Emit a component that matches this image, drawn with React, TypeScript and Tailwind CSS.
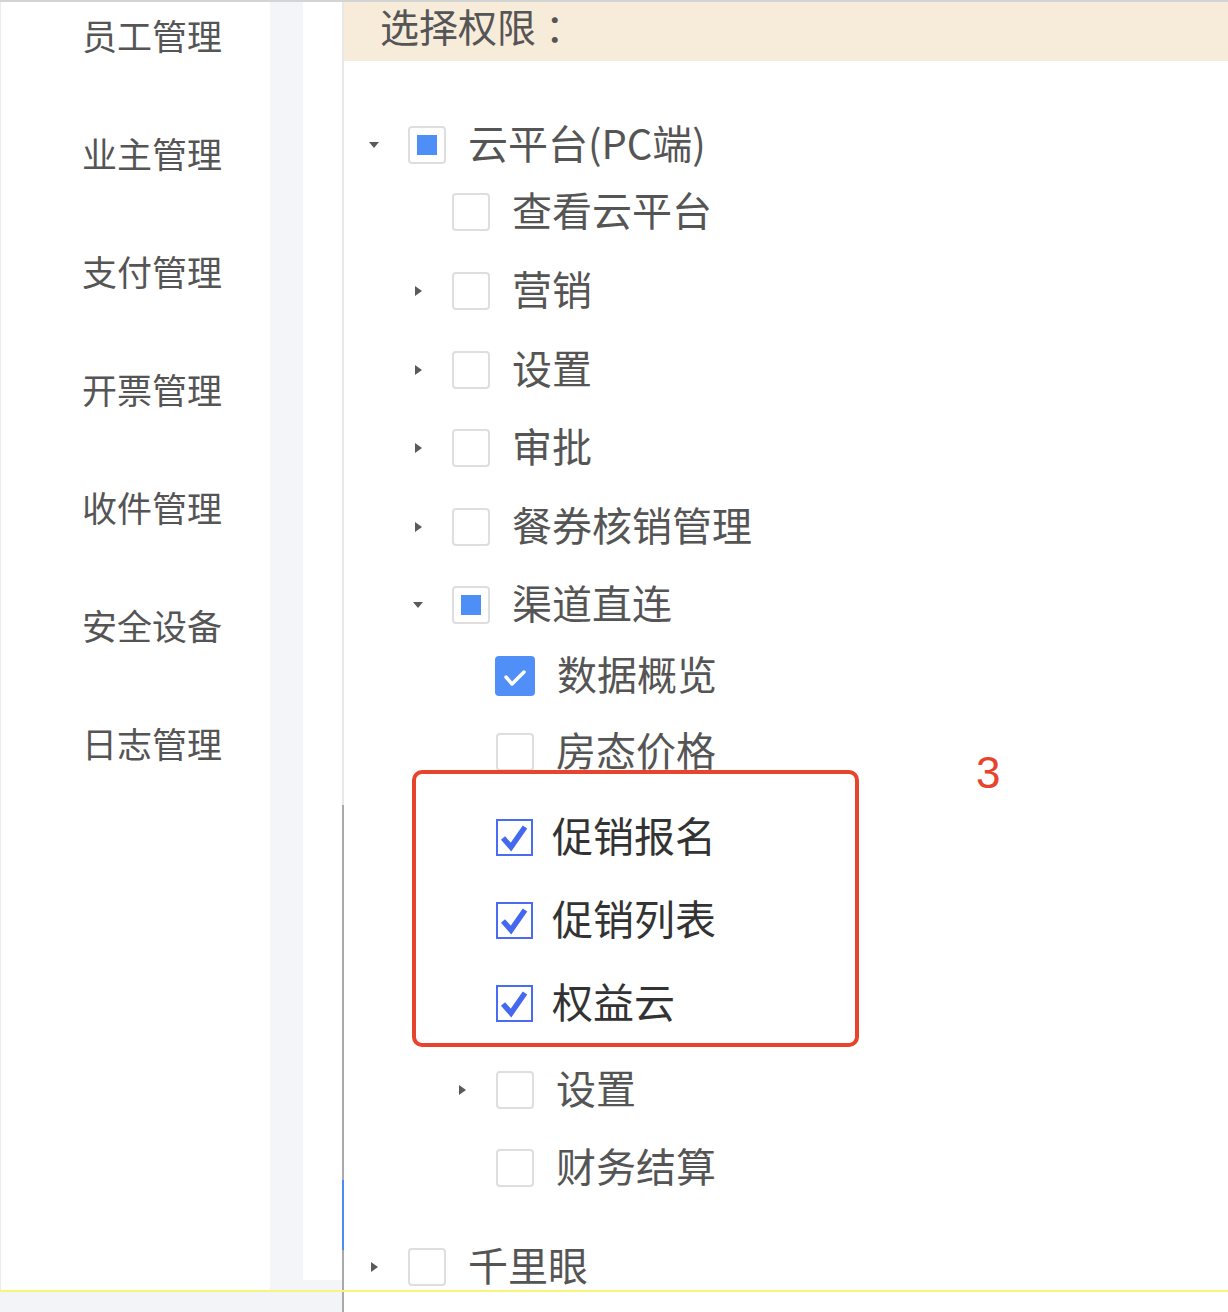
import React from "react";

type State = "off" | "ind" | "on";
type Row = {
  level: 0 | 1 | 2;
  caret: "down" | "right" | null;
  state: State;
  label: string;
  mt: string;
};

const levelPad: Record<number, string> = {
  0: "pl-[20px]",
  1: "pl-[64px]",
  2: "pl-[108px]",
};

const topRows: Row[] = [
  { level: 0, caret: "down", state: "ind", label: "云平台(PC端)", mt: "mt-[64px]" },
  { level: 1, caret: null, state: "off", label: "查看云平台", mt: "mt-[27px]" },
  { level: 1, caret: "right", state: "off", label: "营销", mt: "mt-[39px]" },
  { level: 1, caret: "right", state: "off", label: "设置", mt: "mt-[39px]" },
  { level: 1, caret: "right", state: "off", label: "审批", mt: "mt-[38px]" },
  { level: 1, caret: "right", state: "off", label: "餐券核销管理", mt: "mt-[39px]" },
  { level: 1, caret: "down", state: "ind", label: "渠道直连", mt: "mt-[38px]" },
  { level: 2, caret: null, state: "on", label: "数据概览", mt: "mt-[31px]" },
  { level: 2, caret: null, state: "off", label: "房态价格", mt: "mt-[36px]" },
];

const bottomRows: Row[] = [
  { level: 2, caret: "right", state: "off", label: "设置", mt: "mt-[23px]" },
  { level: 2, caret: null, state: "off", label: "财务结算", mt: "mt-[38px]" },
  { level: 0, caret: "right", state: "off", label: "千里眼", mt: "mt-[59px]" },
];

const boxed = [
  { label: "促销报名", mt: "" },
  { label: "促销列表", mt: "mt-[43px]" },
  { label: "权益云", mt: "mt-[43px]" },
];

const sideItems = ["员工管理", "业主管理", "支付管理", "开票管理", "收件管理", "安全设备", "日志管理"];

function Caret({ dir }: { dir: "down" | "right" | null }) {
  return (
    <div className="w-[20px] h-[20px] flex items-center justify-center shrink-0">
      {dir === "down" && (
        <svg width="10" height="6" viewBox="0 0 10 6">
          <polygon points="0,0 10,0 5,6" fill="#5a5a5a" />
        </svg>
      )}
      {dir === "right" && (
        <svg width="7" height="10" viewBox="0 0 7 10">
          <polygon points="0,0 7,5 0,10" fill="#5a5a5a" />
        </svg>
      )}
    </div>
  );
}

function Check({ state }: { state: State }) {
  if (state === "on") {
    return (
      <div className="w-[40px] h-[40px] rounded-[4px] bg-[#4f8ff7] flex items-center justify-center shrink-0 -ml-[1px]">
        <svg width="40" height="40" viewBox="0 0 40 40">
          <polyline points="11,21 17,28 29,16" fill="none" stroke="#ffffff" strokeWidth="3.5" strokeLinecap="round" strokeLinejoin="round" />
        </svg>
      </div>
    );
  }
  return (
    <div className="w-[38px] h-[38px] rounded-[4px] border-2 border-[#dedede] bg-white flex items-center justify-center shrink-0">
      {state === "ind" && <div className="w-[20px] h-[20px] bg-[#4e8ef7]" />}
    </div>
  );
}

function TreeRow({ row }: { row: Row }) {
  return (
    <div className={`flex items-center h-[40px] ${row.mt} ${levelPad[row.level]}`}>
      <Caret dir={row.caret} />
      <div className="ml-[24px]">
        <Check state={row.state} />
      </div>
      <span className="ml-[22px] pb-[6px] text-[40px] leading-[40px] text-[#555555] whitespace-nowrap">{row.label}</span>
    </div>
  );
}

function BlueCheck() {
  return (
    <div className="w-[37px] h-[37px] border-2 border-[#4a6cf5] bg-white shrink-0 flex items-center justify-center">
      <svg width="33" height="33" viewBox="0 0 33 33">
        <polyline points="5,17 13,26 27,6" fill="none" stroke="#4468f0" strokeWidth="5.5" strokeLinejoin="miter" />
      </svg>
    </div>
  );
}

export default function App() {
  return (
    <div className="w-[1228px] h-[1312px] relative overflow-hidden bg-white flex flex-col font-[family-name:'Noto_Sans_CJK_SC','Noto_Sans',sans-serif]">
      <div className="h-[2px] bg-[#d4d4d4] shrink-0" />
      <div className="flex h-[1288px] shrink-0">
        {/* sidebar */}
        <div className="w-[270px] bg-white border-l border-[#ececec] flex flex-col gap-[48px] pl-[81px]">
          {sideItems.map((s) => (
            <div key={s} className="h-[70px] pb-[6px] flex items-center text-[35px] leading-none text-[#555555] whitespace-nowrap">
              {s}
            </div>
          ))}
        </div>
        <div className="w-[33px] bg-[#f3f5f8]" />
        <div className="w-[39px] flex flex-col">
          <div className="h-[1278px] bg-white" />
          <div className="flex-1 bg-[#f3f5f8]" />
        </div>
        {/* divider */}
        <div className="w-[2px] flex flex-col">
          <div className="h-[803px] bg-[#e8e8e8]" />
          <div className="h-[375px] bg-[#a9a9a9]" />
          <div className="h-[70px] bg-[#4a8cf6]" />
          <div className="flex-1 bg-[#a9a9a9]" />
        </div>
        {/* panel */}
        <div className="flex-1 flex flex-col">
          <div className="h-[59px] bg-[#f7ebda] pl-[36px] flex items-start shrink-0">
            <span className="mt-[1px] text-[39px] leading-[44px] text-[#555555] whitespace-nowrap">
              选择权限<span className="ml-[9px]">：</span>
            </span>
          </div>
          <div className="flex flex-col">
            {topRows.map((r, i) => (
              <TreeRow key={"t" + i} row={r} />
            ))}
            <div className="relative -mt-[2px] ml-[68px] w-[447px] border-[4px] border-[#e8432c] rounded-[10px] bg-white pt-[43px] pb-[20px] pl-[80px]">
              {boxed.map((b) => (
                <div key={b.label} className={`flex items-center h-[40px] ${b.mt}`}>
                  <BlueCheck />
                  <span className="ml-[19px] pb-[6px] text-[41px] leading-[40px] text-[#333333] whitespace-nowrap">{b.label}</span>
                </div>
              ))}
            </div>
            {bottomRows.map((r, i) => (
              <TreeRow key={"b" + i} row={r} />
            ))}
          </div>
        </div>
      </div>
      <div className="h-[2px] bg-[#fbf47a] shrink-0" />
      <div className="flex flex-1">
        <div className="w-[342px] bg-[#f3f4f7]" />
        <div className="w-[2px] bg-[#a9a9a9]" />
        <div className="flex-1 bg-white" />
      </div>
      <div className="absolute left-[976px] top-[751px] text-[44px] leading-none text-[#e8432c] font-[family-name:'Liberation_Sans',sans-serif]">
        3
      </div>
    </div>
  );
}
